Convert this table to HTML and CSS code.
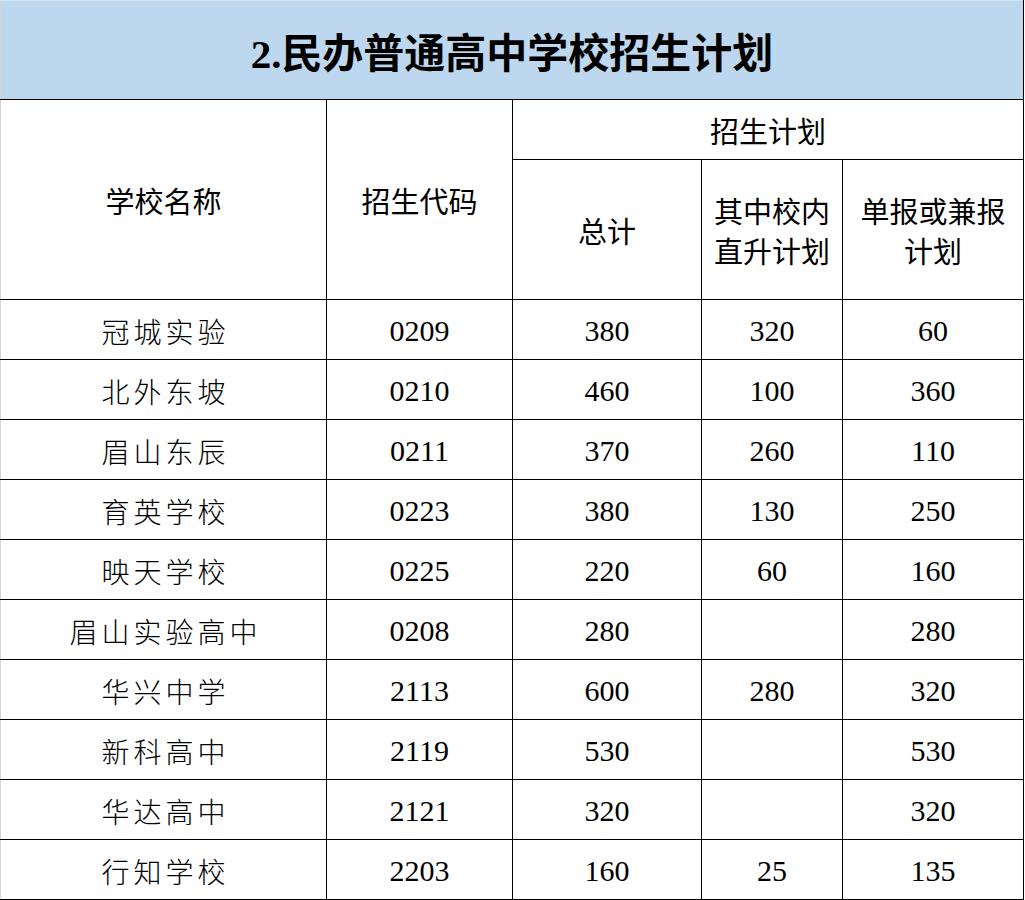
FILE: index.html
```html
<!DOCTYPE html>
<html lang="zh-CN">
<head>
<meta charset="utf-8">
<title>民办普通高中学校招生计划</title>
<link rel="stylesheet" href="styles.css">
</head>
<body>
<table class="plan">
  <colgroup>
    <col class="c-name">
    <col class="c-code">
    <col class="c-total">
    <col class="c-inner">
    <col class="c-single">
  </colgroup>
  <thead>
    <tr class="r-title"><th colspan="5" class="title edge">2.民办普通高中学校招生计划</th></tr>
    <tr class="r-h1">
      <th rowspan="2" class="hd edge">学校名称</th>
      <th rowspan="2" class="hd">招生代码</th>
      <th colspan="3" class="hd">招生计划</th>
    </tr>
    <tr class="r-h2">
      <th class="hd">总计</th>
      <th class="hd">其中校内<br>直升计划</th>
      <th class="hd">单报或兼报<br>计划</th>
    </tr>
  </thead>
  <tbody>
    <tr><td class="nm edge">冠城实验</td><td>0209</td><td>380</td><td>320</td><td>60</td></tr>
    <tr><td class="nm edge">北外东坡</td><td>0210</td><td>460</td><td>100</td><td>360</td></tr>
    <tr><td class="nm edge">眉山东辰</td><td>0211</td><td>370</td><td>260</td><td>110</td></tr>
    <tr><td class="nm edge">育英学校</td><td>0223</td><td>380</td><td>130</td><td>250</td></tr>
    <tr><td class="nm edge">映天学校</td><td>0225</td><td>220</td><td>60</td><td>160</td></tr>
    <tr><td class="nm edge">眉山实验高中</td><td>0208</td><td>280</td><td></td><td>280</td></tr>
    <tr><td class="nm edge">华兴中学</td><td>2113</td><td>600</td><td>280</td><td>320</td></tr>
    <tr><td class="nm edge">新科高中</td><td>2119</td><td>530</td><td></td><td>530</td></tr>
    <tr><td class="nm edge">华达高中</td><td>2121</td><td>320</td><td></td><td>320</td></tr>
    <tr><td class="nm edge">行知学校</td><td>2203</td><td>160</td><td>25</td><td>135</td></tr>
  </tbody>
</table>
</body>
</html>
```
FILE: styles.css
```css
html, body {
  margin: 0;
  padding: 0;
  background: #ffffff;
  overflow: hidden;
}
.plan {
  width: 1023px;
  table-layout: fixed;
  border-collapse: collapse;
  color: #000;
}
.c-name { width: 326px; }
.c-code { width: 186px; }
.c-total { width: 189px; }
.c-inner { width: 141px; }
.c-single { width: 181px; }

.plan th, .plan td {
  border: 1px solid #000;
  padding: 0;
  text-align: center;
  vertical-align: middle;
}
.plan .edge { border-left: 1px solid #d4d4d4; }
.plan .r-title th { border-top: 1px solid #d6e4f0; }

.title {
  height: 98px;
  background: #bdd7ee;
  font-family: "Liberation Serif", "Noto Sans CJK SC", serif;
  font-size: 41px;
  font-weight: bold;
}
.hd {
  font-family: "Noto Sans CJK SC", sans-serif;
  font-weight: normal;
  font-size: 29px;
  line-height: 40px;
}
.r-h1 { height: 60px; }
.r-h2 { height: 140px; }

.plan tbody tr { height: 60px; }
.plan td {
  font-family: "Liberation Serif", "Noto Sans CJK SC", serif;
  font-size: 30px;
  line-height: 40px;
  padding-top: 3px;
}
.plan td.nm {
  font-family: "Noto Sans CJK SC", sans-serif;
  font-weight: 300;
  font-size: 28px;
  letter-spacing: 4px;
  text-indent: 4px;
}
```
